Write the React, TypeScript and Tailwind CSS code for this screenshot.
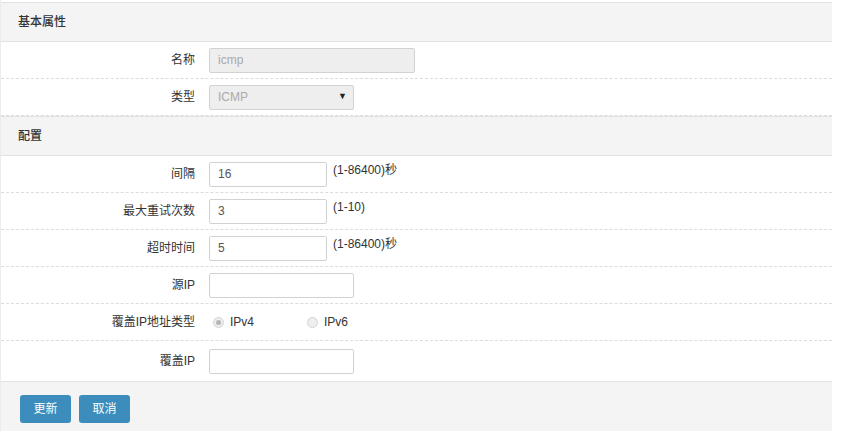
import React from 'react'

const font = "font-['Liberation_Sans','Noto_Sans_CJK_SC',sans-serif]"

function SectionHeader({ title }: { title: string }) {
  return (
    <div className="h-[40px] bg-[#f4f4f4] border-y border-[#e2e2e2] flex items-center px-[17px] text-[12px] text-[#333] font-medium">
      {title}
    </div>
  )
}

function Row({ label, children, last }: { label: string; children: React.ReactNode; last?: boolean }) {
  return (
    <div className={'flex items-center ' + (last ? 'h-[40px]' : 'h-[37px] border-b border-dashed border-[#dcdcdc]')}>
      <div className="w-[194px] text-right text-[12px] text-[#333]">{label}</div>
      <div className="ml-[14px] flex items-center">{children}</div>
    </div>
  )
}

function TextInput({ value, width, disabled }: { value?: string; width: string; disabled?: boolean }) {
  return (
    <input
      readOnly
      value={value ?? ''}
      className={
        'h-[25px] border border-[#d2d2d2] rounded-[2px] px-[8px] text-[12px] outline-none ' +
        width +
        (disabled ? ' bg-[#eeeeee] text-[#aaaaaa]' : ' bg-white text-[#555]')
      }
    />
  )
}

function Radio({ label, checked }: { label: string; checked?: boolean }) {
  return (
    <div className="flex items-center">
      <span className="w-[11px] h-[11px] rounded-full border border-[#d4d4d4] bg-[#eeeeee] flex items-center justify-center">
        {checked && <span className="w-[5px] h-[5px] rounded-full bg-[#b5b5b5]" />}
      </span>
      <span className="ml-[6px] text-[12px] text-[#333]">{label}</span>
    </div>
  )
}

export default function App() {
  return (
    <div className={'w-[844px] h-[440px] bg-white ' + font}>
      <div className="w-[832px] pt-[2px] border-l border-[#ececec]">
        <SectionHeader title="基本属性" />
        <Row label="名称">
          <TextInput value="icmp" width="w-[206px]" disabled />
        </Row>
        <Row label="类型">
          <div className="w-[145px] h-[25px] border border-[#d2d2d2] rounded-[2px] bg-[#eeeeee] flex items-center justify-between pl-[8px] pr-[6px] text-[12px] text-[#aaaaaa]">
            <span>ICMP</span>
            <span className="text-[9px] text-[#222]">▼</span>
          </div>
        </Row>
        <SectionHeader title="配置" />
        <Row label="间隔">
          <TextInput value="16" width="w-[118px]" />
          <span className="ml-[6px] -mt-[8px] text-[12px] text-[#333]">(1-86400)秒</span>
        </Row>
        <Row label="最大重试次数">
          <TextInput value="3" width="w-[118px]" />
          <span className="ml-[6px] -mt-[8px] text-[12px] text-[#333]">(1-10)</span>
        </Row>
        <Row label="超时时间">
          <TextInput value="5" width="w-[118px]" />
          <span className="ml-[6px] -mt-[8px] text-[12px] text-[#333]">(1-86400)秒</span>
        </Row>
        <Row label="源IP">
          <TextInput width="w-[145px]" />
        </Row>
        <Row label="覆盖IP地址类型">
          <div className="flex items-center pl-[4px]">
            <div className="w-[94px]">
              <Radio label="IPv4" checked />
            </div>
            <Radio label="IPv6" />
          </div>
        </Row>
        <Row label="覆盖IP" last>
          <TextInput width="w-[145px]" />
        </Row>
        <div className="h-[50px] bg-[#f4f4f4] border-t border-[#e2e2e2] flex items-start pt-[13px] px-[19px] gap-[8px]">
          <button className="w-[51px] h-[28px] rounded-[3px] bg-[#3c8dbc] text-white text-[12px]">更新</button>
          <button className="w-[51px] h-[28px] rounded-[3px] bg-[#3c8dbc] text-white text-[12px]">取消</button>
        </div>
      </div>
    </div>
  )
}
